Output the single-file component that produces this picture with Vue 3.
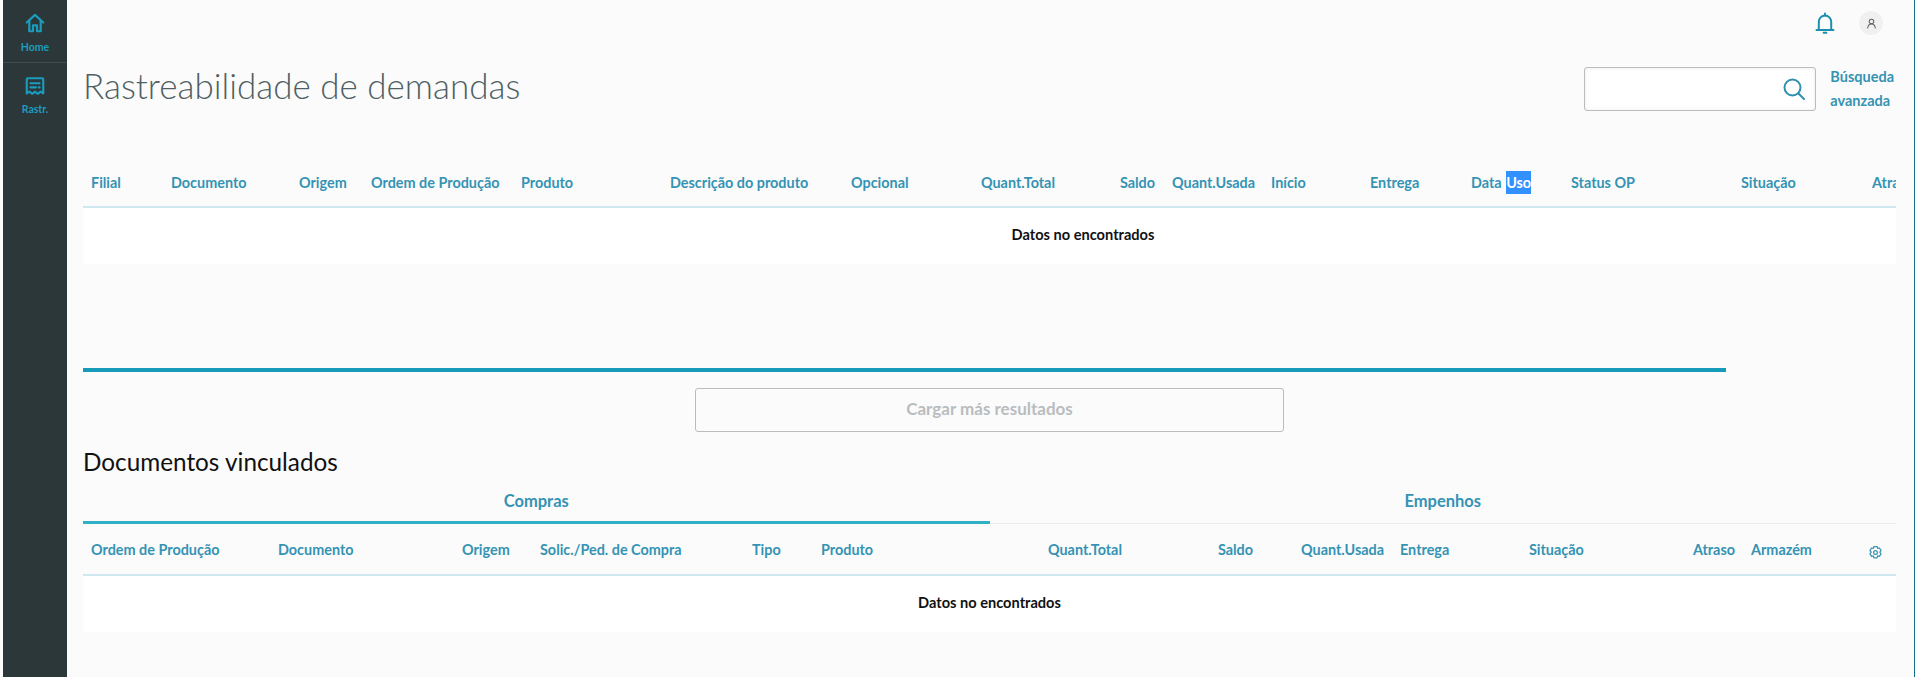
<template>
  <div class="page">
    <nav class="sidebar">
      <a class="nav-item">
        <svg class="nav-icon" viewBox="0 0 24 24" fill="none" stroke="currentColor" stroke-width="2.400" stroke-linejoin="round" stroke-linecap="round">
          <path d="M3 11.500 12 3.200l9 8.300" />
          <path d="M5.800 9.500V21h4v-6.500h4.400V21h4V9.500" />
        </svg>
        <span>Home</span>
      </a>
      <a class="nav-item">
        <svg class="nav-icon" viewBox="0 0 24 24" fill="none" stroke="currentColor" stroke-width="2.300" stroke-linejoin="round" stroke-linecap="round">
          <path d="M4 3.500h16a1 1 0 0 1 1 1V20l-3-1.800-3 2.300-3-2.300-3 2.300-3-2.300L3 20V4.500a1 1 0 0 1 1-1z" />
          <path d="M7 9h10M7 13.500h6M16 13.500h1" />
        </svg>
        <span>Rastr.</span>
      </a>
    </nav>

    <main class="content">
      <header class="topbar">
        <svg class="bell" viewBox="0 0 20 22" fill="none" stroke="currentColor" stroke-width="2" stroke-linecap="round" stroke-linejoin="round">
          <path d="M1.500 18h17" />
          <path d="M3.800 18V9.800a6.200 6.200 0 0 1 12.400 0V18" />
          <path d="M10 1.500v2" />
          <path d="M8.600 20.800h2.800" />
        </svg>
        <div class="avatar">
          <svg viewBox="0 0 12 12" fill="none" stroke="#5d6466" stroke-width="1.100" stroke-linecap="round">
            <circle cx="6" cy="3.800" r="2.500" />
            <path d="M1.800 11c.4-2.800 2-4.400 4.200-4.400s3.800 1.600 4.200 4.400" />
          </svg>
        </div>
      </header>

      <section class="head">
        <h1>Rastreabilidade de demandas</h1>
        <div class="search">
          <div class="search-box">
            <svg viewBox="0 0 22 22" fill="none" stroke="currentColor" stroke-width="2" stroke-linecap="round">
              <circle cx="9.500" cy="9.500" r="8" />
              <path d="m15.500 15.500 5.500 5.500" />
            </svg>
          </div>
          <a class="advanced">Búsqueda<br />avanzada</a>
        </div>
      </section>

      <section class="table-wrap">
        <div class="table table-main">
          <div class="row row-main">
            <div v-for="col in mainColumns" :key="col.label" class="cell" :class="{ right: col.right }">
              <template v-if="col.label === 'Data Uso'">Data <span class="picked">Uso</span></template>
              <template v-else>{{ col.label }}</template>
            </div>
          </div>
          <div class="empty">Datos no encontrados</div>
        </div>
      </section>

      <div class="scroll-thumb"></div>

      <div class="more">
        <button class="more-btn" disabled>Cargar más resultados</button>
      </div>

      <h2>Documentos vinculados</h2>

      <div class="tabs">
        <div class="tab active">Compras</div>
        <div class="tab">Empenhos</div>
      </div>

      <section class="table-wrap">
        <div class="table">
          <div class="row row-docs">
            <div v-for="col in docColumns" :key="col.label" class="cell" :class="{ right: col.right }">{{ col.label }}</div>
            <div class="cell gear-cell">
              <svg class="gear" viewBox="0 0 24 24" fill="none" stroke="currentColor" stroke-width="2" stroke-linejoin="round">
                <path d="M9.500 2.500h5l1 3 2.900-.7 2.500 4.300-2.100 2.400 2.100 2.400-2.500 4.300-2.900-.7-1 3h-5l-1-3-2.900.7-2.500-4.300 2.100-2.400-2.100-2.400 2.500-4.300 2.900.7z" />
                <circle cx="12" cy="12" r="3" />
              </svg>
            </div>
          </div>
          <div class="empty">Datos no encontrados</div>
        </div>
      </section>
    </main>
  </div>
</template>

<script setup>
const mainColumns = [
  { label: 'Filial' },
  { label: 'Documento' },
  { label: 'Origem' },
  { label: 'Ordem de Produção' },
  { label: 'Produto' },
  { label: 'Descrição do produto' },
  { label: 'Opcional' },
  { label: 'Quant.Total', right: true },
  { label: 'Saldo', right: true },
  { label: 'Quant.Usada', right: true },
  { label: 'Início' },
  { label: 'Entrega' },
  { label: 'Data Uso' },
  { label: 'Status OP' },
  { label: 'Situação' },
  { label: 'Atraso' },
]

const docColumns = [
  { label: 'Ordem de Produção' },
  { label: 'Documento' },
  { label: 'Origem' },
  { label: 'Solic./Ped. de Compra' },
  { label: 'Tipo' },
  { label: 'Produto' },
  { label: 'Quant.Total', right: true },
  { label: 'Saldo', right: true },
  { label: 'Quant.Usada', right: true },
  { label: 'Entrega' },
  { label: 'Situação' },
  { label: 'Atraso', right: true },
  { label: 'Armazém' },
]
</script>

<style>
html,
body {
  margin: 0;
  background: #fbfbfb;
}
</style>

<style scoped>
.page {
  display: flex;
  height: 677px;
  overflow: hidden;
  box-sizing: border-box;
  padding-left: 3px;
  border-right: 1px solid #0f6f86;
  background: #fbfbfb;
  font-family: Lato, "Open Sans", sans-serif;
  color: #3493b4;
}

.sidebar {
  flex: 0 0 64px;
  background: #2c3739;
}

.nav-item {
  display: flex;
  flex-direction: column;
  align-items: center;
  height: 63px;
  box-sizing: border-box;
  padding-top: 12px;
  color: #1b9cbd;
  font-size: 10.500px;
  font-weight: 700;
  line-height: 14px;
}

.nav-item:first-child {
  border-bottom: 1px solid #3f4b4d;
}

.nav-icon {
  width: 22px;
  height: 22px;
  margin-bottom: 5px;
}

.nav-item:first-child .nav-icon {
  margin-bottom: 6px;
}

.content {
  flex: 1;
  min-width: 0;
  padding: 0 18px 0 16px;
}

.topbar {
  display: flex;
  justify-content: flex-end;
  align-items: center;
  gap: 24px;
  height: 46px;
  padding-right: 13px;
}

.bell {
  width: 20px;
  height: 22px;
  color: #1b8fb0;
}

.avatar {
  display: flex;
  align-items: center;
  justify-content: center;
  width: 24px;
  height: 24px;
  border-radius: 50%;
  background: #f0f0f0;
}

.avatar svg {
  width: 11px;
  height: 11px;
}

.head {
  display: flex;
  justify-content: space-between;
  align-items: flex-start;
  margin-top: 21px;
  height: 93px;
}

h1 {
  margin: -4px 0 0;
  font-size: 35px;
  font-weight: 300;
  line-height: 44px;
  color: #4f5f63;
}

.search {
  display: flex;
  gap: 14px;
  padding-right: 2px;
}

.search-box {
  display: flex;
  align-items: center;
  justify-content: flex-end;
  width: 232px;
  height: 44px;
  box-sizing: border-box;
  padding-right: 10px;
  border: 1px solid #b9bdbf;
  border-radius: 3px;
  background: #fff;
  box-shadow: inset 0 0 4px rgba(0, 0, 0, 0.08);
}

.search-box svg {
  width: 22px;
  height: 22px;
  color: #2f8fb0;
}

.advanced {
  font-size: 14.500px;
  font-weight: 700;
  line-height: 24px;
  white-space: nowrap;
  margin-top: -2px;
}

.table-wrap {
  overflow: hidden;
}

.table-main {
  width: 2000px;
}

.row {
  display: grid;
  align-items: center;
  height: 44px;
  padding-bottom: 2px;
  border-bottom: 2px solid #cfe8f0;
  font-size: 14.400px;
  font-weight: 700;
  white-space: nowrap;
}

.row-main {
  grid-template-columns: 80px 128px 72px 150px 149px 181px 100px 120px 100px 100px 99px 101px 100px 170px 131px 100px 119px;
}

.row-docs {
  grid-template-columns: 187px 184px 78px 212px 69px 187px 130px 131px 131px 129px 109px 113px 113px 39px;
  height: 47px;
  padding: 2px 0 1px;
}

.cell {
  padding: 0 8px;
  overflow: hidden;
}

.right {
  text-align: right;
}

.picked {
  display: inline-block;
  margin-left: 1px;
  background: #3390ff;
  color: #fff;
  line-height: 23px;
}

.gear-cell {
  display: flex;
  justify-content: center;
  padding: 6px 0 0;
}

.gear {
  width: 15px;
  height: 15px;
  color: #3a95b4;
}

.empty {
  display: flex;
  align-items: center;
  justify-content: center;
  height: 52px;
  padding-bottom: 4px;
  background: #fff;
  color: #111;
  font-size: 14.600px;
  font-weight: 700;
}

.scroll-thumb {
  width: 1643px;
  height: 4px;
  margin-top: 104px;
  background: #159ab9;
}

.more {
  display: flex;
  justify-content: center;
  margin-top: 16px;
}

.more-btn {
  width: 589px;
  height: 44px;
  padding-bottom: 4px;
  border: 1px solid #b9bdbf;
  border-radius: 3px;
  background: #fbfbfb;
  color: #b9bdbf;
  font-family: inherit;
  font-size: 17px;
  font-weight: 700;
}

h2 {
  margin: 15px 0 0;
  font-size: 24.300px;
  font-weight: 400;
  line-height: 30px;
  color: #111;
}

.tabs {
  display: flex;
  margin-top: 8px;
}

.tab {
  flex: 1;
  height: 39px;
  box-sizing: border-box;
  padding-top: 6px;
  border-bottom: 1px solid #ececec;
  text-align: center;
  font-size: 16.500px;
  font-weight: 700;
  line-height: 20px;
}

.tab.active {
  border-bottom: 3px solid #2fb0c4;
}
</style>
